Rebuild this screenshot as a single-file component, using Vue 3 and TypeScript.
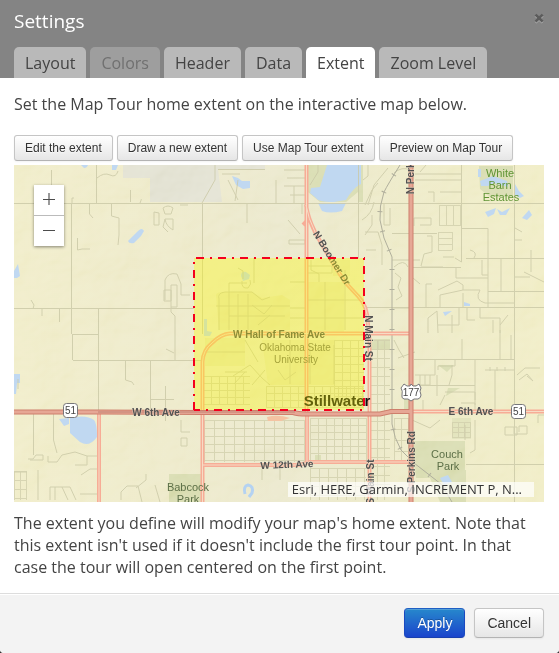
<script setup lang="ts">
import { ref } from 'vue'

interface Tab {
  label: string
  disabled?: boolean
}

interface MapLabel {
  text: string
  x: number
  y: number
  kind: 'street' | 'place' | 'estate' | 'campus' | 'city'
  rotate?: number
}

const tabs: Tab[] = [
  { label: 'Layout' },
  { label: 'Colors', disabled: true },
  { label: 'Header' },
  { label: 'Data' },
  { label: 'Extent' },
  { label: 'Zoom Level' },
]
const activeTab = ref('Extent')

const tools = ['Edit the extent', 'Draw a new extent', 'Use Map Tour extent', 'Preview on Map Tour']

/* Builds a block of evenly spaced streets */
function grid(x0: number, y0: number, x1: number, y1: number, dx: number, dy: number): string {
  let d = ''
  for (let x = x0; x <= x1; x += dx) d += `M${x + 0.5} ${y0}V${y1}`
  for (let y = y0; y <= y1; y += dy) d += `M${x0} ${y + 0.5}H${x1}`
  return d
}

const streetGrids = [
  grid(203, 376, 250, 404, 8, 7),
  grid(266, 386, 364, 407, 8, 7),
  grid(334, 340, 364, 404, 8, 8),
  grid(204, 420, 304, 462, 10, 8),
  grid(310, 418, 366, 462, 8, 7),
  grid(370, 340, 390, 500, 7, 9),
  grid(310, 468, 366, 500, 9, 9),
  grid(439, 205, 461, 225, 7, 20),
  grid(438, 232, 452, 250, 14, 6),
  grid(452, 422, 470, 438, 6, 5),
  grid(14, 471, 26, 500, 6, 9),
  grid(394, 418, 408, 462, 7, 11),
]

const labels: MapLabel[] = [
  { text: 'White', x: 500, y: 177, kind: 'estate' },
  { text: 'Barn', x: 500, y: 189, kind: 'estate' },
  { text: 'Estates', x: 501, y: 201, kind: 'estate' },
  { text: 'Oklahoma State', x: 295, y: 351, kind: 'campus' },
  { text: 'University', x: 296, y: 363, kind: 'campus' },
  { text: 'Babcock', x: 188, y: 491, kind: 'place' },
  { text: 'Park', x: 188, y: 503, kind: 'place' },
  { text: 'Couch', x: 447, y: 458, kind: 'place' },
  { text: 'Park', x: 448, y: 470, kind: 'place' },
  { text: 'W Hall of Fame Ave', x: 279, y: 338, kind: 'street' },
  { text: 'W 6th Ave', x: 156, y: 416, kind: 'street' },
  { text: 'E 6th Ave', x: 471, y: 415, kind: 'street' },
  { text: 'W 12th Ave', x: 287, y: 468, kind: 'street', rotate: -2 },
  { text: 'N Main St', x: 365, y: 338, kind: 'street', rotate: 90 },
  { text: 'S Main St', x: 374, y: 482, kind: 'street', rotate: -90 },
  { text: 'N Perkins Rd', x: 414, y: 163, kind: 'street', rotate: -90 },
  { text: 'S Perkins Rd', x: 415, y: 462, kind: 'street', rotate: -90 },
  { text: 'N Boomer Dr', x: 329, y: 260, kind: 'street', rotate: 58 },
  { text: 'Stillwater', x: 337, y: 406, kind: 'city' },
]

function turn(label: MapLabel): string | undefined {
  return label.rotate ? `rotate(${label.rotate} ${label.x} ${label.y})` : undefined
}
</script>

<template>
  <section class="dialog" role="dialog" aria-labelledby="dialog-title">
    <header class="head">
      <div class="title-row">
        <h1 id="dialog-title">Settings</h1>
        <button class="close" type="button" aria-label="Close">×</button>
      </div>
      <nav class="tabs" role="tablist">
        <button
          v-for="tab in tabs"
          :key="tab.label"
          type="button"
          role="tab"
          class="tab"
          :class="{ active: tab.label === activeTab }"
          :aria-selected="tab.label === activeTab"
          :disabled="tab.disabled"
          @click="activeTab = tab.label"
        >{{ tab.label }}</button>
      </nav>
    </header>

    <main class="body">
      <p class="intro">Set the Map Tour home extent on the interactive map below.</p>
      <div class="tools">
        <button v-for="tool in tools" :key="tool" type="button" class="btn small">{{ tool }}</button>
      </div>

      <div class="map">
        <svg class="canvas" viewBox="14 165 530 337" preserveAspectRatio="xMidYMid slice" aria-hidden="true">
          <defs>
            <filter id="relief" x="0" y="0" width="100%" height="100%">
              <feTurbulence type="fractalNoise" baseFrequency="0.018 0.022" numOctaves="4" seed="8" result="n" />
              <feDiffuseLighting in="n" surfaceScale="8" diffuseConstant="1" lighting-color="#ffffff">
                <feDistantLight azimuth="225" elevation="50" />
              </feDiffuseLighting>
            </filter>
            <linearGradient id="land" x1="0" x2="1">
              <stop offset="0" stop-color="#efebc4" />
              <stop offset="0.3" stop-color="#ece8c5" />
              <stop offset="0.5" stop-color="#e9e6c8" />
              <stop offset="0.75" stop-color="#ece9c3" />
              <stop offset="1" stop-color="#efebc0" />
            </linearGradient>
          </defs>

          <rect x="14" y="165" width="530" height="337" fill="url(#land)" />

          <!-- airport, parks and campus -->
          <path fill="#e0dfce" d="M123 165H265V169H218L222 202H150V178H123Z" />
          <g fill="#d5d9aa">
            <path d="M306 165H363V202H358V192L346 202H320L308 192Z" />
            <path d="M479 166H513V197H490L480 189Z" />
            <path d="M169 474H201V502H169Z" />
            <path d="M411 441H465V470H466V502H440L430 478H416Z" />
            <path d="M371 339H390V350H371Z" />
            <path d="M438 365H454L447 372Z" />
            <path d="M448 388H460L446 396Z" />
            <path d="M404 398H409V409H404Z" />
            <path d="M315 455H321V462H315Z" />
          </g>
          <path fill="#dfe0b4" d="M452 418H471V439H452Z" />
          <g fill="#e5e1b4">
            <path d="M216 295Q216 292 225 292H252L262 298L282 295L290 300V330H219Z" />
            <path d="M308 282H344V334H308Z" />
            <path d="M262 340H334V385H268Z" />
            <path d="M205 338H245V366H205Z" />
            <path d="M333 260H350V276H333Z" />
          </g>
          <rect class="relief" x="14" y="165" width="530" height="337" filter="url(#relief)" />

          <!-- water -->
          <g fill="#c0d8f1">
            <path d="M327 165H361V184Q353 188 346 200L334 202Q318 202 316 198L310 193L311 188L320 187Z" />
            <path d="M318 203H346L342 211Q330 214 322 211Z" />
            <path d="M232 176L238 178L242 181H250V188L243 189L236 185Z" />
            <path d="M128 241L138 231Q142 227 144 231L141 236L134 243Q129 244 128 241Z" />
            <path d="M81 165H88Q87 168 84 168Z M112 165H118L116 170H112Z" />
            <path d="M14 271L18 264L20 276L17 278H14Z M14 374H20V383H17L16 394H14Z" />
            <path d="M70 418Q86 414 94 420Q97 423 97 437Q89 448 80 442L70 433Z M59 419L69 418V424L64 426Z" />
            <path d="M241 276Q241 271 246 272L250 275L249 279L243 281Z" />
            <path d="M204 319H207V331L212 332L210 336H204Z" />
            <path d="M480 181L493 176L507 181L508 187L494 183L488 186L481 186Z M478 169H481V177H478Z M515 184L519 191L524 196L520 198L515 195Z" />
            <path d="M485 212L496 208L494 214L488 217Z M497 209L502 212L510 208L506 215H500Z M522 218L529 210L532 215L527 220Z" />
            <path d="M464 302L470 304V306H464Z M443 312L452 311L445 316Z" />
            <path d="M440 478L448 475L452 482L444 485Z" />
          </g>
          <path d="M245 494Q243 486 248 485Q254 486 252 493L249 497" fill="none" stroke="#b4d2f2" stroke-width="3" />

          <!-- local streets -->
          <g class="streets">
            <path v-for="(d, i) in streetGrids" :key="i" :d="d" class="faint" />
            <path d="M14 203.500H544M14 308.500H194M365 307.500H544M73 360.500H202M71.500 203V334M98.500 308V412M72.500 334V360M72 334.500H98M96.500 165V203M51.500 170V188M202.500 203V334M150.500 361V410M150 399.500H174M165.500 386V421M125.500 361V380L132 382L134 385" />
            <path d="M97 178Q104 172 110 175T118 171M130.500 190V202M140 203Q142 198 141 200M72 203V198H74M89.500 203V214L93 218M111.500 203V216L119 218V235L118 245M154 212V225H159V213ZM163 208Q168 204 173 208L171 214H165ZM173 219V230Q166 226 165 219ZM165 219L163 227L168 232M180 205H188M77.500 238V250L82 249H90M33 309L34 305L31 300M42 309V316M59.500 309V322" />
            <path d="M165 300V280Q168 272 177 274L181 284V295H190M164 290H171V301H164ZM171 285H177V307H171ZM171 307V312L175 316V360M166 349L174 353" />
            <path d="M215 165V180L202 203M218 169.500H265M222 174H240M228 180L238 200M238 180L235 201M247 203V223M276 180V203M284 170H305M287 178H305M284 186H305M290 195H305M294 186V203M289 240H305V244H289ZM288 220L300 234M302 203V214M318 165V172L310 185M358.500 165V258M363 180L368 176V165M365 205L372 190L378 183M362 220Q372 214 374 202M365 235L372 225V215M366 250H376" />
            <path d="M365 232H378L382 245V265M368 205L374 185L388 168M384 203V225H390M390 208V225M394 173Q402 166 410 170M415 180H461M415 174H461M420 172L426 165M428 192H434V202M440 192H461M461.500 165V262L455 258M461 228.500H488V307M392 233.500H437M414 226V218H431V225H420M427 236H432V252L424 254L421 266M421 267H443M443 257H454M392 260H420M412 267.500H461M456 267V278H488M488 291.500H544M514.500 165V502M466 258.500H544M470 250Q478 252 474 258M482 260V275H488M501 259V291M522 240H514M531 250V272M515 277L530 277M524 272L544 282M515 228L522 232" />
            <path d="M394 267Q404 258 408 267M395 273L401 278L398 287L402 296L396 300M413 278L420 284M438 290L457 281L463 285V290H480Q474 300 485 303H514M426 307V284H432M440 308V295L463 290M463 293V308M392 308H411M428 333V318L437 311L438 333M438 325H459V308M452 315V333M467 308V320H475M480 308V318H500V333M493 320V333M508 315L500 325" />
            <path d="M18 389V379M33.500 413V455M53.500 413V440L57 453M28 459H33L36 455H43V460H30M48 456V462H57L62 455L75 452L87 456H98M87 456V465H75M50 500V487H70L76 500M55 487V500M62 487L68 500M81 475L90 469H98M121 500V492L127 486H138L142 502M136 488L146 480V474M155 485L160 502M181 420V432H190M181 438H187V446H181Z M80 494H98M38 470V500" />
            <path d="M219 330V299Q217 293 225 292H252L262 300L270 297M229 292V330M238 294V330M248 294V330M216 306H290M229 316H285M252 305L264 314L272 305M258 325L270 315M229 292V283H247M243 279V271L238 268M242 281Q241 289 248 288Q252 284 250 280M254 258V283" />
            <path d="M290 318H306M290 308H306M306 273H332V266H306M290 282H306M311 260V270L319 274V282M325 282V330M345 270V330M308 300H364M308 318H364M204 352H245M233 376L250 365L262 378L270 385M225 372H247M234 384L245 372M252 385L265 370M245 340L258 362M278 370L285 380L296 372M290 340V384M310 345V384M334 345V384" />
            <path d="M378 340V350M394 340L399 350L404 358M398 358L415 352M414 359.500H514M414 385.500H475M420 375V385H430V375M425 375V385M415 375H435V359M437 396V375M452 365V375L449 385M462 359V339M475 360V405M438 370V366H455V360M485 370H515M490 367V371M497 367V371M505 367V371M500 330V359M511 335V359M445 395L440 405M445 392H475V400M423 400V411M495 370V411M517 375L525 368H540M519 380L527 374L533 381L527 376M461 403H475V411M505 427H517V435H505ZM514 427V434H527V426H519V432M538 423V415H544M465 425V440M475 420V450L470 453M466 464.500H544M412 420L430 428L440 420M280 469V480M262 469V480M14 472H27" />
          </g>

          <!-- railroad -->
          <g fill="none" stroke="#b0af9c">
            <path d="M400 165Q388 184 384 192Q379 206 380 220L384 238L392 257V424Q394 438 401 450L414 463L441 484L452 502" />
            <path d="M400 165Q388 184 384 192Q379 206 380 220L384 238L392 257V424Q394 438 401 450L414 463L441 484L452 502" stroke-width="5" stroke-dasharray="1 19" stroke-dashoffset="9" />
          </g>

          <!-- arterial roads -->
          <g fill="none">
            <g class="arterial-edge">
              <path d="M306.500 165V208V412M307 412V461M306 205Q308 218 315 232Q330 260 345 282L358 296Q368 306 368 325L369.500 340V502" />
              <path d="M308 220L303 225" />
              <path d="M411 333.500H230Q221 334 212 343Q203 350 202.500 362V502" />
              <path d="M99 414V502M203 465H299L310 462H411M413 411.500H544" />
            </g>
            <g class="arterial-core">
              <path d="M306.500 165V208V412M307 412V461M306 205Q308 218 315 232Q330 260 345 282L358 296Q368 306 368 325L369.500 340V502" />
              <path d="M411 333.500H230Q221 334 212 343Q203 350 202.500 362V502" />
              <path d="M99 414V502M203 465H299L310 462H411M413 411.500H544" />
            </g>
            <path class="highway-edge" d="M14 412H98L202 412.500H293Q298 414 306 414H380L391 411.500H411M411 165V502" />
            <path class="highway-core" d="M14 412H98L202 412.500H293Q298 414 306 414H380L391 411.500H411M411 165V502" />
            <path d="M98 412H295" stroke="#c08172" />
          </g>
          <path d="M267 417Q278 414 290 418L281 421H268Z" fill="#f4c3a2" />

          <!-- place and street names -->
          <text
            v-for="label in labels"
            :key="label.text + label.x + label.y"
            :x="label.x"
            :y="label.y"
            :class="label.kind"
            :transform="turn(label)"
          >{{ label.text }}</text>

          <!-- route shields -->
          <g fill="#fff" stroke="#77777a" stroke-width="1">
            <rect x="63.500" y="403.500" width="14" height="14" rx="3" />
            <rect x="511.500" y="404.500" width="14" height="14" rx="3" />
            <path d="M404 384L407 386H410L411 384L413 386H416L419 384L421 388Q419 391 421 395Q421 398 418 399H414L411 401L408 399H404Q401 398 402 395Q403 391 401 388Z" />
          </g>
          <g class="shield-text">
            <text x="70.500" y="414">51</text>
            <text x="518.500" y="415">51</text>
            <text x="411" y="396">177</text>
          </g>

          <!-- home extent -->
          <rect x="194" y="258" width="170" height="152" fill="#fbf800" fill-opacity="0.35" />
          <g fill="none" stroke="#f5001d" stroke-width="2" stroke-dasharray="8 6 2 6">
            <path d="M196 258H365" />
            <path d="M194 258V411" stroke-dashoffset="10" />
            <path d="M364 258V411" stroke-dashoffset="14" />
            <path d="M194 410H365" stroke-dashoffset="2" />
          </g>
        </svg>

        <div class="zoom">
          <button type="button" aria-label="Zoom in">
            <svg viewBox="0 0 30 30"><path d="M15 8V20" stroke="#999" stroke-width="2" /><path d="M9 14.500H21" stroke="#4c4c4c" /></svg>
          </button>
          <button type="button" aria-label="Zoom out">
            <svg viewBox="0 0 30 30"><path d="M9 14.500H21" stroke="#4c4c4c" /></svg>
          </button>
        </div>
        <div class="credits">Esri, HERE, Garmin, INCREMENT P, N...</div>
      </div>

      <p class="note">The extent you define will modify your map's home extent. Note that this extent isn't used if it doesn't include the first tour point. In that case the tour will open centered on the first point.</p>
    </main>

    <footer class="foot">
      <button type="button" class="btn primary">Apply</button>
      <button type="button" class="btn">Cancel</button>
    </footer>
  </section>
</template>

<style>
body {
  margin: 0;
  background: #333;
}
</style>

<style scoped>
.dialog {
  display: flex;
  flex-direction: column;
  min-height: 100vh;
  overflow: hidden;
  border-radius: 0 0 4px 4px;
  background: #fff;
  color: #444;
  font: 16px/22px "Open Sans", "Noto Sans", sans-serif;
}

button {
  margin: 0;
  font-family: inherit;
}

.head {
  padding: 6px 14px 0;
  background: #848484;
}

.title-row {
  display: flex;
  justify-content: space-between;
  align-items: flex-start;
  height: 41px;
}

h1 {
  margin: 0;
  color: #fff;
  font-size: 19px;
  font-weight: 500;
  line-height: 30px;
}

.close {
  padding: 0;
  border: 0;
  background: none;
  color: #5c5c5c;
  font-size: 20px;
  font-weight: 800;
  line-height: 24px;
  text-shadow: 0 1px 0 #aaa;
}

.tabs {
  display: flex;
  gap: 4px;
}

.tab {
  padding: 5px 11px 4px;
  border: 0;
  border-radius: 5px 5px 0 0;
  background: #b9b9b9;
  color: #444;
  font-size: 16px;
  line-height: 22px;
}

.tab:disabled {
  background: #9e9e9e;
  color: #707070;
}

.tab.active {
  background: #fff;
}

.body {
  flex: 1;
  padding: 15px 15px 15px 14px;
}

.intro,
.note {
  margin: 0;
}

.tools {
  display: flex;
  gap: 4px;
  margin: 20px 0 4px;
}

.btn {
  padding: 4px 12px;
  border: 1px solid #c5c5c5;
  border-bottom-color: #b3b3b3;
  border-radius: 4px;
  background: linear-gradient(#fff, #e6e6e6);
  box-shadow: inset 0 1px 0 rgba(255, 255, 255, 0.2), 0 1px 2px rgba(0, 0, 0, 0.05);
  color: #333;
  font: 14px/20px "Liberation Sans", Arial, sans-serif;
  text-shadow: 0 1px 1px rgba(255, 255, 255, 0.75);
}

.btn.small {
  padding: 2px 10px;
  border-radius: 3px;
  font-size: 12px;
}

.btn.primary {
  border-color: #1f5fc4 #1a49c0 #183fae;
  background: linear-gradient(#2788cc, #1a44cc);
  color: #fff;
  text-shadow: 0 -1px 0 rgba(0, 0, 0, 0.25);
}

.map {
  position: relative;
  height: 337px;
  margin-bottom: 10px;
  overflow: hidden;
}

.canvas {
  display: block;
  width: 100%;
  height: 100%;
}

.relief {
  mix-blend-mode: soft-light;
  opacity: 0.4;
}

.streets {
  fill: none;
  stroke: #cac8a6;
  stroke-width: 1;
  opacity: 0.8;
}

.faint {
  stroke: #d2d0ad;
}

.arterial-edge {
  stroke: #f7ac96;
  stroke-width: 4;
}

.arterial-core {
  stroke: #f6dcc4;
  stroke-width: 1;
}

.highway-edge {
  stroke: #ce7f6c;
  stroke-width: 5;
}

.highway-core {
  stroke: #e6a795;
  stroke-width: 3;
}

.canvas text {
  font-family: "Liberation Sans", Arial, sans-serif;
  text-anchor: middle;
  paint-order: stroke;
}

.street {
  fill: #525252;
  stroke: #f0ead0;
  stroke-width: 1px;
  stroke-opacity: 0.6;
  font-size: 10px;
  font-weight: 700;
}

.place {
  fill: #5d7048;
  font-size: 11px;
}

.estate {
  fill: #5f9434;
  font-size: 11px;
}

.campus {
  fill: #77755a;
  font-size: 10px;
}

.city {
  fill: #111;
  font-size: 15px;
  font-weight: 700;
}

.shield-text {
  fill: #444;
  font-size: 10px;
}

.zoom {
  position: absolute;
  top: 20px;
  left: 20px;
  display: flex;
  flex-direction: column;
  gap: 1px;
  background: #bbb;
  box-shadow: 0 1px 3px rgba(0, 0, 0, 0.45);
}

.zoom button {
  width: 30px;
  height: 30px;
  padding: 0;
  border: 0;
  background: #fff;
}

.zoom svg {
  display: block;
}

.credits {
  position: absolute;
  right: 10px;
  bottom: 5px;
  padding: 0 12px 0 4px;
  background: rgba(255, 255, 255, 0.7);
  color: #333;
  font-size: 13px;
  line-height: 15px;
}

.foot {
  display: flex;
  justify-content: flex-end;
  gap: 9px;
  padding: 14px 15px 15px;
  border-top: 1px solid #ddd;
  background: #f3f3f3;
  box-shadow: inset 0 1px 0 #fff;
}
</style>
